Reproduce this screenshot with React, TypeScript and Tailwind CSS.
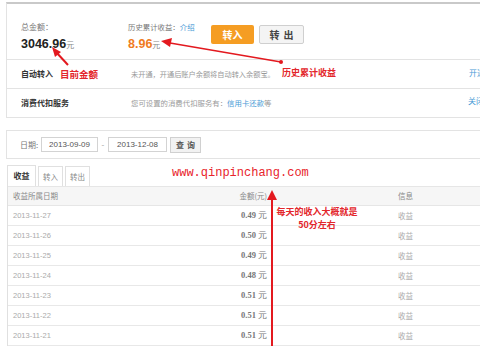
import React from "react";

const rows = [
  ["2013-11-27", "0.49"],
  ["2013-11-26", "0.50"],
  ["2013-11-25", "0.49"],
  ["2013-11-24", "0.48"],
  ["2013-11-23", "0.51"],
  ["2013-11-22", "0.51"],
  ["2013-11-21", "0.51"],
];

export default function App() {
  return (
    <div
      className="relative w-[480px] h-[346px] overflow-hidden bg-white text-[8px] text-[#666]"
      style={{ fontFamily: '"Noto Sans CJK SC", "Liberation Sans", sans-serif' }}
    >
      {/* Top panel */}
      <div className="mt-[2px] ml-[6px] w-[500px] border-t-2 border-t-[#c9c9c9] border-l border-l-[#e3e3e3] border-b border-b-[#e3e3e3]">
        <div className="h-[56px] flex items-start pl-[14px] pt-[17px] border-b border-[#e3e3e3]">
          <div className="w-[107px] flex flex-col">
            <span className="text-[8px] leading-[12px] text-[#777]">总金额：</span>
            <span className="leading-[16px] mt-[3px]">
              <span className="text-[12.5px] font-bold text-[#222]" style={{ fontFamily: '"Liberation Sans", sans-serif' }}>3046.96</span>
              <span className="text-[8px] text-[#888]">元</span>
            </span>
          </div>
          <div className="w-[83px] flex flex-col">
            <span className="text-[7.4px] leading-[12px] text-[#777] whitespace-nowrap">
              历史累计收益：<span className="text-[#4a9bd6]">介绍</span>
            </span>
            <span className="leading-[16px] mt-[3px]">
              <span className="text-[12.5px] font-bold text-[#f07b1e]" style={{ fontFamily: '"Liberation Sans", sans-serif' }}>8.96</span>
              <span className="text-[8px] text-[#888]">元</span>
            </span>
          </div>
          <div className="flex gap-[5px] mt-[4px]">
            <div className="w-[43px] h-[19px] flex items-center justify-center bg-[#f59d23] text-white text-[10px] font-bold rounded-[2px]">转入</div>
            <div className="w-[45px] h-[19px] flex items-center justify-center bg-[#f4f4f4] border border-[#cfcfcf] text-[#444] text-[10px] font-bold tracking-[4px] pl-[4px] rounded-[2px]">转出</div>
          </div>
        </div>
        <div className="h-[29px] flex items-center pl-[14px] border-b border-[#e3e3e3]">
          <span className="w-[110px] text-[8px] font-bold text-[#333]">自动转入</span>
          <span className="text-[7.2px] text-[#999]">未开通，开通后账户余额将自动转入余额宝。</span>
          <span className="ml-auto mr-[21px] text-[8px] text-[#4a9bd6] -mt-[3px]">开通</span>
        </div>
        <div className="h-[28px] flex items-center pl-[14px]">
          <span className="w-[110px] text-[8px] font-bold text-[#333]">消费代扣服务</span>
          <span className="text-[7.4px] text-[#999]">
            您可设置的消费代扣服务有：<span className="text-[#4a9bd6]">信用卡还款</span>等
          </span>
          <span className="ml-auto mr-[22px] text-[8px] text-[#4a9bd6] -mt-[5px]">关闭</span>
        </div>
      </div>

      {/* Date filter */}
      <div className="mt-[12px] ml-[6px] w-[500px] h-[29px] border border-[#e3e3e3] flex items-center pl-[13px] gap-[3px]">
        <span className="text-[8px] text-[#777] w-[18px] whitespace-nowrap">日期:</span>
        <div className="w-[57px] h-[15px] border border-[#d3d3d3] flex items-center justify-center text-[8px] text-[#555]" style={{ fontFamily: '"Liberation Sans", sans-serif' }}>2013-09-09</div>
        <span className="w-[4px] text-center text-[#999]">-</span>
        <div className="w-[59px] h-[15px] border border-[#d3d3d3] flex items-center justify-center text-[8px] text-[#555]" style={{ fontFamily: '"Liberation Sans", sans-serif' }}>2013-12-08</div>
        <div className="w-[31px] h-[16px] border border-[#d0d0d0] bg-[#f2f2f2] flex items-center justify-center text-[8px] font-bold text-[#555] tracking-[3px] pl-[3px]">查询</div>
      </div>

      {/* Tabs */}
      <div className="mt-[6px] ml-[7px] flex items-end h-[21px]">
        <div className="w-[29px] h-[21px] border border-[#e0e0e0] border-b-0 bg-white flex items-center justify-center text-[8px] font-bold text-[#333]">收益</div>
        <div className="ml-[2px] w-[25px] h-[20px] border border-[#e0e0e0] border-b-0 flex items-center justify-center text-[7.5px] text-[#888]">转入</div>
        <div className="ml-[2px] w-[25px] h-[20px] border border-[#e0e0e0] border-b-0 flex items-center justify-center text-[7.5px] text-[#888]">转出</div>
      </div>

      {/* Table */}
      <div className="ml-[7px] w-[500px] border-l border-[#e0e0e0]">
        <div className="grid grid-cols-[200px_59px_131px_1fr] h-[20px] items-center bg-[#f6f6f6] border-t border-b border-[#e6e6e6] text-[7.5px] text-[#888]">
          <span className="pl-[5px]">收益所属日期</span>
          <span className="text-right">金额(元)</span>
          <span />
          <span>信息</span>
        </div>
        {rows.map(([d, a]) => (
          <div key={d} className="grid grid-cols-[200px_59px_131px_1fr] h-[20px] items-center border-b border-[#e8e8e8] text-[7.5px]">
            <span className="pl-[5px] text-[#aaa]" style={{ fontFamily: '"Liberation Sans", sans-serif' }}>{d}</span>
            <span className="text-right text-[#777] font-bold text-[8.5px]" style={{ fontFamily: '"Liberation Serif", serif' }}>
              {a} <span className="font-normal">元</span>
            </span>
            <span />
            <span className="text-[#aaa]">收益</span>
          </div>
        ))}
      </div>

      {/* Annotations overlay */}
      <span className="absolute left-[60px] top-[67px] text-[9.5px] font-bold text-[#e3262b] leading-[14px]" style={{ fontFamily: '"Noto Sans CJK SC", serif' }}>目前金额</span>
      <span className="absolute left-[282px] top-[66px] text-[9px] font-bold text-[#e3262b] leading-[13px]" style={{ fontFamily: '"Noto Sans CJK SC", serif' }}>历史累计收益</span>
      <span
        className="absolute left-[172px] top-[165px] text-[12px] text-[#e8232b] leading-[16px] whitespace-nowrap"
        style={{ fontFamily: '"Liberation Mono", "DejaVu Sans Mono", monospace' }}
      >
        www.qinpinchang.com
      </span>
      <div className="absolute left-[274px] top-[205px] w-[86px] flex flex-col items-center text-[9px] font-bold text-[#e3262b] leading-[13px]">
        <span className="whitespace-nowrap">每天的收入大概就是</span>
        <span>50分左右</span>
      </div>
      <svg className="absolute left-0 top-0" width="480" height="346" viewBox="0 0 480 346">
        <g stroke="#e3191f" strokeWidth="2" fill="#e3191f">
          <line x1="68" y1="65" x2="56" y2="52" />
          <polygon points="52,47 61,52 55,57" stroke="none" />
          <line x1="281" y1="62" x2="170" y2="43" strokeWidth="1.6" />
          <polygon points="161,41 172,38 170,47" stroke="none" />
          <circle cx="281" cy="62" r="2" stroke="none" />
          <line x1="272" y1="346" x2="272" y2="198" />
          <polygon points="272,190 267,200 277,200" stroke="none" />
        </g>
      </svg>
    </div>
  );
}
